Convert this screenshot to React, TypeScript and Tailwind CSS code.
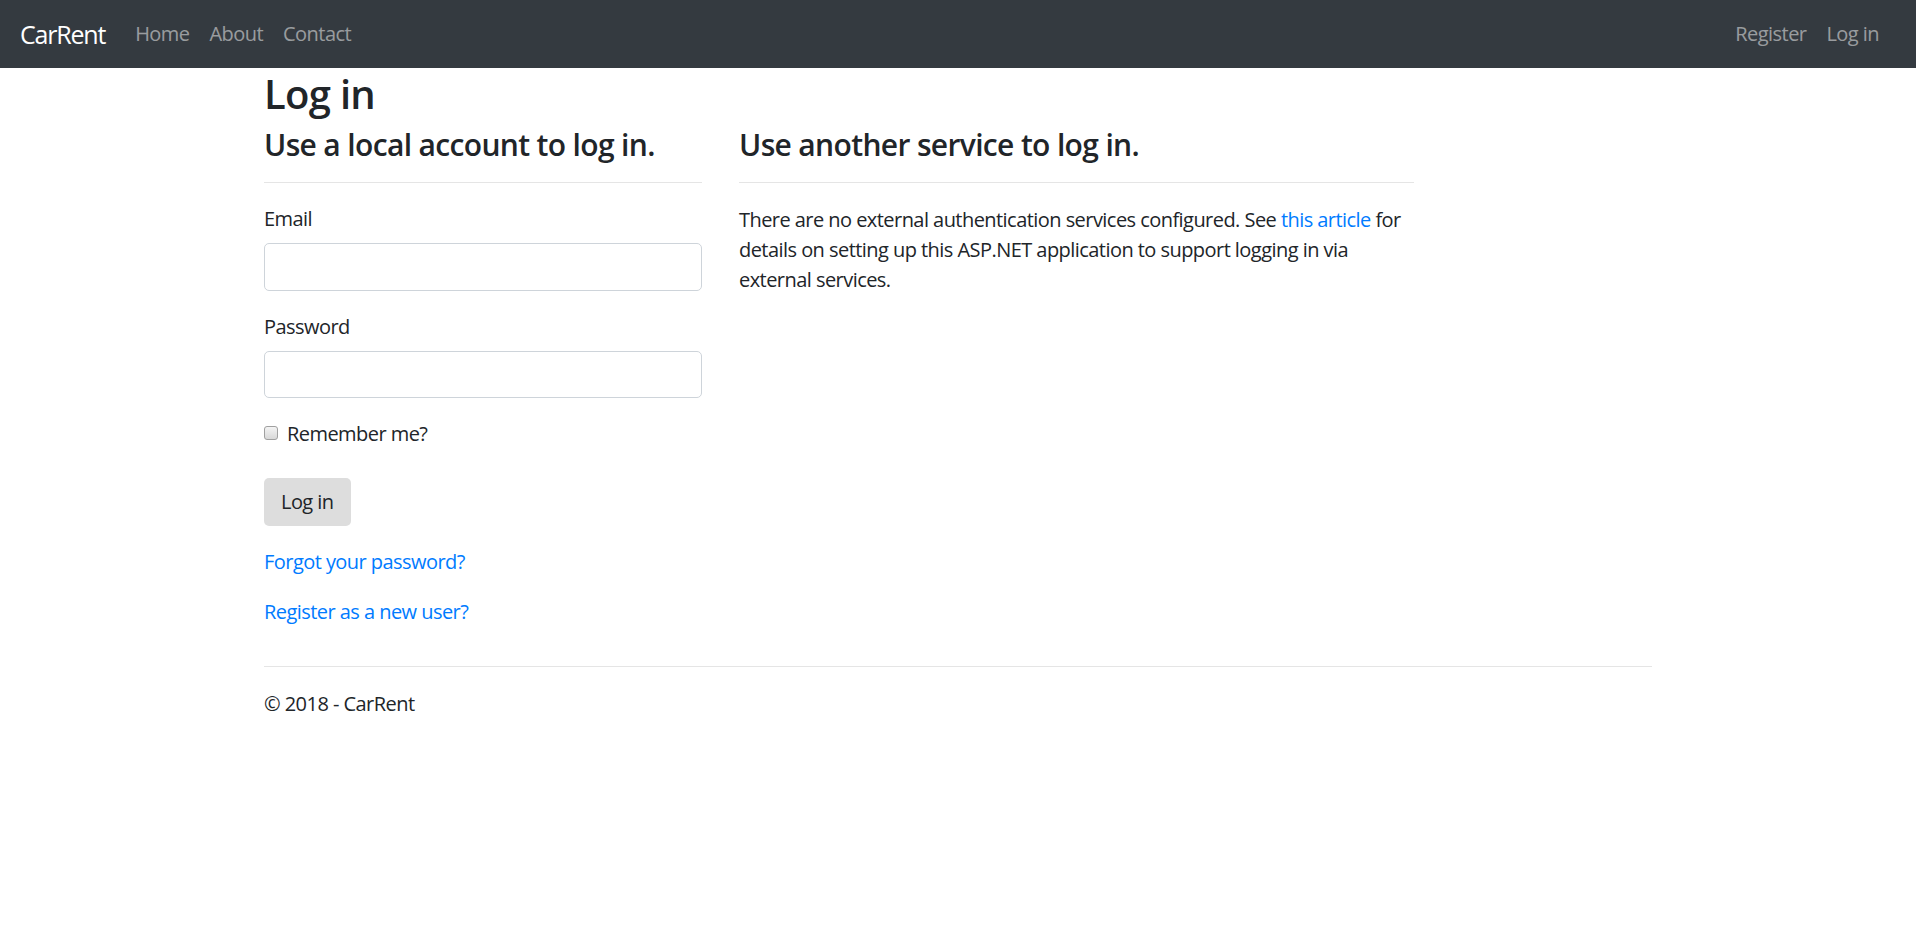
import React from 'react'

const NavLink = ({ children }: { children: React.ReactNode }) => (
  <a href="#" className="px-[10px] text-[20px] leading-[30px] text-white/50">{children}</a>
)

const App = () => {
  return (
    <div className="min-h-screen bg-white text-[#212529] font-['Open_Sans',sans-serif] text-[20px] leading-[30px] tracking-[-0.55px]">
      <nav className="h-[68px] bg-[#343a40] flex items-center justify-between pl-[20px] pr-[27px]">
        <div className="flex items-center">
          <a href="#" className="mr-[20px] text-[25px] leading-[38px] text-white tracking-[-1.2px]">CarRent</a>
          <NavLink>Home</NavLink>
          <NavLink>About</NavLink>
          <NavLink>Contact</NavLink>
        </div>
        <div className="flex items-center">
          <NavLink>Register</NavLink>
          <NavLink>Log in</NavLink>
        </div>
      </nav>

      <div className="w-[1388px] mx-auto pt-[1px]">
        <h2 className="text-[40px] leading-[48px] pt-[1px] font-semibold tracking-[-0.7px] mb-[8px]">Log in</h2>
        <div className="flex gap-[37.5px]">
          <div className="w-[437.5px]">
            <h4 className="text-[30px] leading-[34px] pt-[2px] font-semibold tracking-[-0.65px]">Use a local account to log in.</h4>
            <div className="mt-[20px] mb-[20px] border-t border-black/10" />
            <form className="flex flex-col">
              <label className="mb-[10px] pt-[2px] leading-[28px]">Email</label>
              <input className="h-[47.5px] border border-[#ced4da] rounded-[5px] px-[15px] mb-[20px]" />
              <label className="mb-[10px] pt-[2px] leading-[28px]">Password</label>
              <input type="password" className="h-[47.5px] border border-[#ced4da] rounded-[5px] px-[15px] mb-[20px]" />
              <label className="flex items-center mb-[30px] pt-[2px] leading-[28px]">
                <input type="checkbox" className="appearance-none w-[14px] h-[14px] mr-[9px] mt-[-2px] rounded-[3px] border border-[#a0a0a0] bg-gradient-to-b from-[#f4f4f4] to-[#d8d8d8]" />
                Remember me?
              </label>
              <div className="mb-[20px]">
                <button type="button" className="h-[47.5px] px-[17px] pt-[1px] bg-[#dddddd] rounded-[5px] text-[#212529]">Log in</button>
              </div>
              <p className="mb-[20px] pt-[2px] leading-[28px]"><a href="#" className="text-[#007bff]">Forgot your password?</a></p>
              <p className="mb-[20px] pt-[2px] leading-[28px]"><a href="#" className="text-[#007bff]">Register as a new user?</a></p>
            </form>
          </div>
          <div className="w-[675px]">
            <h4 className="text-[30px] leading-[34px] pt-[2px] font-semibold tracking-[-0.65px]">Use another service to log in.</h4>
            <div className="mt-[20px] mb-[20px] border-t border-black/10" />
            <p className="pt-[2px]">
              There are no external authentication services configured. See <a href="#" className="text-[#007bff]">this article</a> for details on setting up this ASP.NET application to support logging in via external services.
            </p>
          </div>
        </div>
        <div className="mt-[20px] border-t border-black/10" />
        <footer className="pt-[22px]">
          <p>© 2018 - CarRent</p>
        </footer>
      </div>
    </div>
  )
}

export default App
